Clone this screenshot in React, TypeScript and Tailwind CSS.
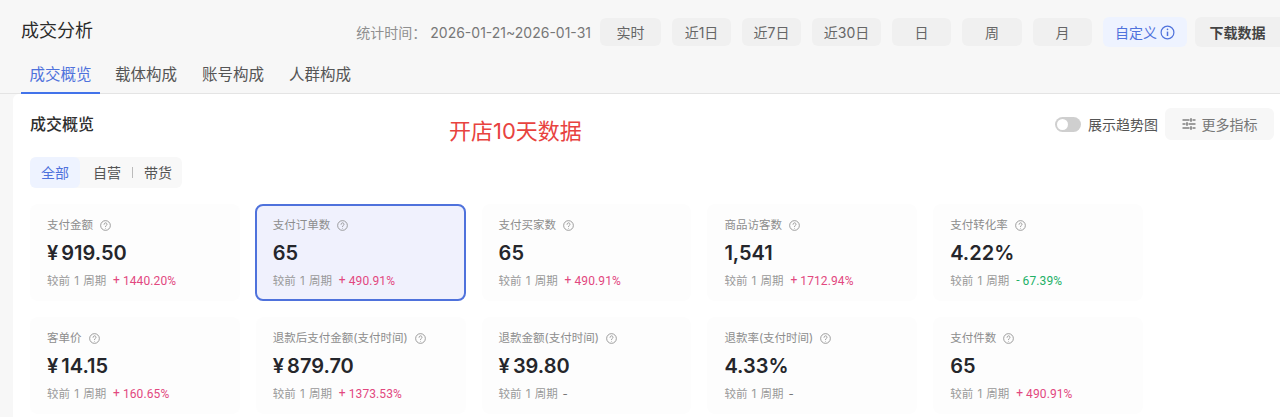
import React from "react";

const font = { fontFamily: '"Inter","Noto Sans CJK SC",sans-serif' };

function Help() {
  return (
    <svg width="11" height="11" viewBox="0 0 12 12" fill="none" className="ml-[7px] shrink-0" stroke="#8a8a8a" strokeWidth="0.9">
      <circle cx="6" cy="6" r="5.3" />
      <path d="M4.4 4.7a1.6 1.6 0 1 1 2.5 1.3c-.6.4-.9.7-.9 1.2" strokeLinecap="round" />
      <circle cx="6" cy="9" r="0.45" fill="#8a8a8a" stroke="none" />
    </svg>
  );
}

type M = { label: string; value: string; delta: string; tone: "up" | "down" | "none"; active?: boolean };

const metrics: M[] = [
  { label: "支付金额", value: "¥919.50", delta: "1440.20%", tone: "up" },
  { label: "支付订单数", value: "65", delta: "490.91%", tone: "up", active: true },
  { label: "支付买家数", value: "65", delta: "490.91%", tone: "up" },
  { label: "商品访客数", value: "1,541", delta: "1712.94%", tone: "up" },
  { label: "支付转化率", value: "4.22%", delta: "67.39%", tone: "down" },
  { label: "客单价", value: "¥14.15", delta: "160.65%", tone: "up" },
  { label: "退款后支付金额(支付时间)", value: "¥879.70", delta: "1373.53%", tone: "up" },
  { label: "退款金额(支付时间)", value: "¥39.80", delta: "", tone: "none" },
  { label: "退款率(支付时间)", value: "4.33%", delta: "", tone: "none" },
  { label: "支付件数", value: "65", delta: "490.91%", tone: "up" },
];

function Card({ m }: { m: M }) {
  const value = m.value.startsWith("¥") ? (
    <>
      <span className="mr-[3px]">¥</span>
      {m.value.slice(1)}
    </>
  ) : (
    m.value
  );
  return (
    <div
      className={
        "h-[97px] rounded-lg " +
        (m.active ? "-ml-px border-2 border-[#4f72dc] bg-[#f0f1fd] pl-[16px] pt-[11px]" : "bg-[#fdfdfd] pl-[17px] pt-[13px]")
      }
    >
      <div className="flex h-[17px] items-center text-[11.5px] leading-[17px] text-[#8d8d8d]">
        {m.label}
        <Help />
      </div>
      <div className="mt-[4px] h-[30px] text-[20px] font-semibold leading-[30px] text-[#25262b]">{value}</div>
      <div className="mt-[5px] flex h-[17px] items-center text-[11.5px] leading-[17px] text-[#999]">
        <span className="w-[58px] whitespace-nowrap [word-spacing:1px]">较前 1 周期</span>
        {m.tone === "none" ? (
          <span className="ml-[6px] text-[#777]">-</span>
        ) : (
          <span
            className={
              "ml-[8px] whitespace-nowrap font-['Roboto'] text-[12px] tracking-[0.1px] " +
              (m.tone === "up" ? "text-[#e2487f]" : "text-[#22b066]")
            }
          >
            <span className="relative top-[-1px] mr-[3px]">{m.tone === "up" ? "+" : "-"}</span>
            {m.delta}
          </span>
        )}
      </div>
    </div>
  );
}

function RangeBtn({ t, w }: { t: string; w: string }) {
  return (
    <div className={"flex h-[28px] items-center justify-center rounded-md bg-[#f0f0f0] text-[14px] text-[#666] " + w}>{t}</div>
  );
}

export default function App() {
  return (
    <div style={font} className="h-[417px] w-[1280px] overflow-hidden bg-[#f7f7f7]">
      <header className="flex h-[63px] items-start justify-between pl-[21px] pt-[17px]">
        <h1 className="text-[18px] font-normal leading-[28px] text-[#2a2a2a]">成交分析</h1>
        <div className="flex items-center">
          <span className="mr-[9px] whitespace-nowrap text-[14px] text-[#8f8f8f]">
            统计时间： <span className="text-[#777]">2026-01-21~2026-01-31</span>
          </span>
          <div className="flex gap-[11px]">
            <RangeBtn t="实时" w="w-[61px]" />
            <RangeBtn t="近1日" w="w-[59px]" />
            <RangeBtn t="近7日" w="w-[59px]" />
            <RangeBtn t="近30日" w="w-[69px]" />
            <RangeBtn t="日" w="w-[59px]" />
            <RangeBtn t="周" w="w-[60px]" />
            <RangeBtn t="月" w="w-[59px]" />
          </div>
          <div className="ml-[11px] flex h-[30px] w-[84px] items-center justify-center gap-[3px] rounded-md bg-[#eef3ff] text-[14px] text-[#4f72dc]">
            自定义
            <svg width="15" height="15" viewBox="0 0 15 15" fill="none" stroke="#4f72dc" strokeWidth="1.2">
              <circle cx="7.5" cy="7.5" r="6.4" />
              <path d="M7.5 6.6v4.4" strokeWidth="1.5" />
              <circle cx="7.5" cy="4.4" r="0.8" fill="#4f72dc" stroke="none" />
            </svg>
          </div>
          <div className="ml-[8px] flex h-[30px] w-[85px] items-center justify-center rounded-l-md bg-[#f0f0f0] text-[14px] font-semibold text-[#444]">
            下载数据
          </div>
        </div>
      </header>

      <nav className="flex h-[31px] items-start border-b border-[#e4e4e4] pl-[21px] text-[15.5px] leading-[24px] text-[#555]">
        <div className="h-[31px] w-[79px] border-b-2 border-[#4273ea] text-center text-[#4f72dc]">成交概览</div>
        <div className="ml-[15px]">载体构成</div>
        <div className="ml-[25px]">账号构成</div>
        <div className="ml-[25px]">人群构成</div>
      </nav>

      <main className="relative ml-[13px] h-[323px] rounded-tl-md bg-white pl-[17px] pt-[14px]">
        <div className="flex h-[32px] items-center justify-between pr-[6px]">
          <h2 className="text-[16px] font-medium text-[#2f2f2f]">成交概览</h2>
          <div className="flex items-center">
            <div className="mr-[7px] flex h-[15px] w-[26px] items-center rounded-full bg-[#cfcfcf] pl-[2px]">
              <div className="h-[11px] w-[11px] rounded-full bg-white" />
            </div>
            <span className="text-[14px] text-[#555]">展示趋势图</span>
            <div className="ml-[7px] flex h-[32px] w-[109px] items-center justify-center gap-[6px] rounded-md bg-[#f7f7f7] text-[14px] text-[#777]">
              <svg width="14" height="14" viewBox="0 0 14 14" fill="none" stroke="#444" strokeWidth="1.1">
                <path d="M0.5 3h7M10.5 3h3M0.5 7h3M6.5 7h7M0.5 11h7M10.5 11h3" />
                <path d="M9 1.2v3.6M5 5.2v3.6M9 9.2v3.6" />
              </svg>
              更多指标
            </div>
          </div>
        </div>

        <div className="absolute left-[436px] top-[23px] text-[22px] leading-[28px] text-[#e8433f]">开店10天数据</div>

        <div className="mt-[17px] flex h-[31px] w-[152px] items-center rounded-md bg-[#f8f8f8] text-[14px] text-[#555]">
          <div className="flex h-full w-[50px] items-center justify-center rounded-md bg-[#eef3ff] text-[#4f72dc]">全部</div>
          <span className="ml-[13px]">自营</span>
          <span className="ml-[11px] h-[11px] w-px bg-[#bbb]" />
          <span className="ml-[11px]">带货</span>
        </div>

        <div className="mt-[16px] grid w-[1113px] grid-cols-5 gap-4">
          {metrics.map((m) => (
            <Card key={m.label} m={m} />
          ))}
        </div>
      </main>
    </div>
  );
}
